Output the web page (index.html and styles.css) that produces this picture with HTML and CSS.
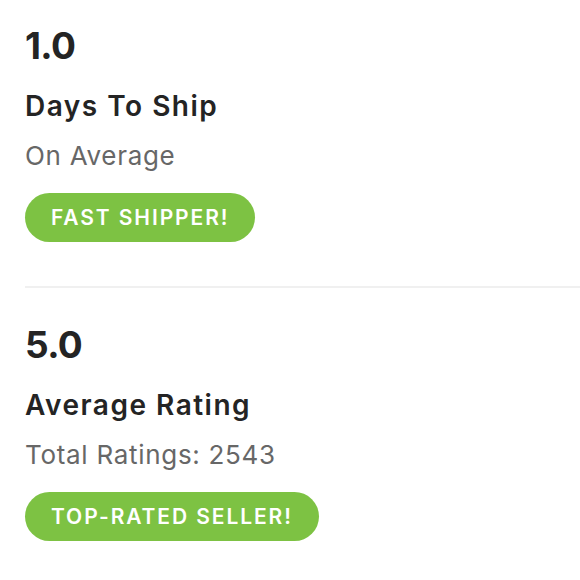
FILE: index.html
```html
<!DOCTYPE html>
<html>
<head>
<meta charset="utf-8">
<link rel="stylesheet" href="styles.css">
</head>
<body>
<div class="stats">
  <div class="stat">
    <div class="stat-value">1.0</div>
    <div class="stat-title">Days To Ship</div>
    <div class="stat-sub">On Average</div>
    <div class="badge">FAST SHIPPER!</div>
  </div>
  <div class="divider"></div>
  <div class="stat stat-second">
    <div class="stat-value">5.0</div>
    <div class="stat-title">Average Rating</div>
    <div class="stat-sub">Total Ratings: 2543</div>
    <div class="badge">TOP-RATED SELLER!</div>
  </div>
</div>
</body>
</html>
```
FILE: styles.css
```css
html, body {
  margin: 0;
  padding: 0;
  background: #ffffff;
}
body {
  font-family: Inter, "Liberation Sans", sans-serif;
  color: #242424;
}
.stats {
  display: flex;
  flex-direction: column;
  padding-left: 25px;
}
.stat {
  display: flex;
  flex-direction: column;
  align-items: flex-start;
  padding-top: 27px;
}
.stat-second {
  padding-top: 38px;
}
.stat-value {
  font-size: 37px;
  line-height: 38px;
  font-weight: 700;
  letter-spacing: -0.6px;
}
.stat-title {
  margin-top: 27px;
  font-size: 28px;
  line-height: 28px;
  font-weight: 600;
  letter-spacing: 1.5px;
}
.stat-sub {
  margin-top: 22px;
  font-size: 26px;
  line-height: 27px;
  font-weight: 400;
  color: #676767;
  letter-spacing: 0.7px;
}
.badge {
  margin-top: 24px;
  height: 49px;
  box-sizing: border-box;
  padding: 0 26px 0 26px;
  display: flex;
  align-items: center;
  border-radius: 25px;
  background: #7dc243;
  color: #ffffff;
  font-size: 21px;
  font-weight: 600;
  letter-spacing: 1.9px;
}
.divider {
  margin-top: 44px;
  height: 2px;
  background: #f0f0f0;
}
```
